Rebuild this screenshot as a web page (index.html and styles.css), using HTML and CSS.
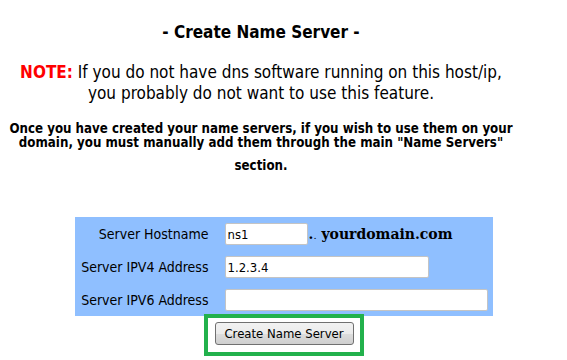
FILE: index.html
```html
<!DOCTYPE html>
<html lang="en">

<head>
	<meta charset="UTF-8">
	<title>Create Name Server</title>
	<link rel="stylesheet" href="styles.css">
</head>

<body>
	<div class="intro">
		<h1 class="title">- Create Name Server -</h1>
		<p class="note"><span class="note-label">NOTE:</span> If you do not have dns software running on this host/ip,<br>you probably do not want to use this feature.</p>
		<p class="info">Once you have created your name servers, if you wish to use them on your<br>domain, you must manually add them through the main "Name Servers"</p>
		<p class="info info-last">section.</p>
	</div>

	<form class="ns-form">
		<div class="ns-table">
			<label class="ns-label" for="hostname">Server Hostname</label>
			<div class="ns-field">
				<input type="text" id="hostname" class="ns-input ns-input-short" value="ns1">
				<span class="domain"><b>.</b><small>.</small> yourdomain.com</span>
			</div>

			<label class="ns-label" for="ipv4">Server IPV4 Address</label>
			<div class="ns-field">
				<input type="text" id="ipv4" class="ns-input ns-input-mid" value="1.2.3.4">
			</div>

			<label class="ns-label" for="ipv6">Server IPV6 Address</label>
			<div class="ns-field">
				<input type="text" id="ipv6" class="ns-input ns-input-long" value="">
			</div>
		</div>

		<div class="submit-box">
			<button type="button" class="btn">Create Name Server</button>
		</div>
	</form>
</body>

</html>
```

FILE: styles.css
```css
* {
	margin: 0;
	padding: 0;
	box-sizing: border-box;
}

body {
	font-family: 'DejaVu Sans Condensed', 'DejaVu Sans', Tahoma, sans-serif;
	color: #000;
	background: white;
	margin: 8px;
}

.intro {
	width: 506px;
	text-align: center;
}

.title {
	font-size: 17px;
	font-weight: bold;
	line-height: 20px;
	margin-top: 14px;
}

.note {
	font-size: 17px;
	line-height: 21px;
	margin-top: 20px;
}

.note-label {
	color: #ff0000;
	font-weight: bold;
}

.info {
	font-size: 13.2px;
	font-weight: bold;
	line-height: 14px;
	margin-top: 18px;
}

.info-last {
	margin-top: 9px;
}

.ns-form {
	display: flex;
	flex-direction: column;
	align-items: center;
	margin-top: 44px;
}

.ns-table {
	display: grid;
	grid-template-columns: 129px 263px;
	column-gap: 16px;
	row-gap: 11px;
	align-items: center;
	width: 418px;
	padding: 6px 5px 5px 5px;
	background: #8fbfff;
}

.ns-label {
	font-size: 14px;
	text-align: right;
	white-space: nowrap;
}

.ns-field {
	display: flex;
	align-items: center;
}

.ns-input {
	height: 22px;
	border: 1px solid #c4c4c4;
	border-radius: 2px;
	background: white;
	font-family: inherit;
	font-size: 13px;
	padding: 0 2px;
	color: #000;
}

.ns-input-short {
	width: 83px;
}

.ns-input-mid {
	width: 204px;
}

.ns-input-long {
	width: 264px;
}

.domain {
	font-family: 'DejaVu Serif', 'Liberation Serif', serif;
	font-weight: bold;
	font-size: 14px;
	margin-left: 1px;
}

.domain small {
	font-weight: normal;
	font-size: 10px;
}

.submit-box {
	margin-top: -2px;
	border: 4px solid #22b14c;
	padding: 4px 6px 7px 7px;
	width: 160px;
}

.btn {
	width: 139px;
	height: 23px;
	border: 1px solid #707070;
	border-radius: 3px;
	background: linear-gradient(#f2f2f2 0%, #ebebeb 50%, #dddddd 51%, #cfcfcf 100%);
	font-family: inherit;
	font-size: 13px;
	color: #000;
	cursor: pointer;
}
```
